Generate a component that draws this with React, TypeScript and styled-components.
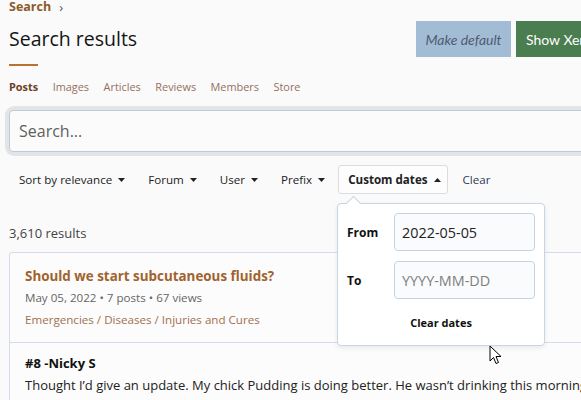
import React from "react";
import styled, { createGlobalStyle } from "styled-components";

const Global = createGlobalStyle`
  html, body { margin: 0; padding: 0; background: #fafafa; }
  body { font-family: "Open Sans", "Noto Sans", sans-serif; color: #141414; overflow: hidden; }
  #root { width: 581px; height: 400px; overflow: hidden; position: relative; }
`;

const Page = styled.div`
  width: 760px;
  padding: 0 9px;
  box-sizing: border-box;
  position: relative;
`;

const Header = styled.div`
  display: flex;
  align-items: flex-start;
`;

const LeftCol = styled.div`
  width: 407px;
`;

const Crumb = styled.div`
  font-size: 12.5px;
  font-weight: 700;
  color: #8b5a2b;
  line-height: 14px;
  display: flex;
  align-items: center;
  gap: 8px;
`;

const Chevron = styled.span`
  color: #555;
  font-weight: 400;
  font-size: 13px;
`;

const Title = styled.h1`
  margin: 11px 0 0;
  font-size: 19.5px;
  font-weight: 400;
  line-height: 28px;
  color: #141414;
`;

const Buttons = styled.div`
  display: flex;
  gap: 5px;
  margin-top: 21px;
`;

const Btn = styled.div<{ $variant: "default" | "green" }>`
  height: 36px;
  display: flex;
  align-items: center;
  padding: 0 10px;
  font-family: "Lato", sans-serif;
  font-size: 14px;
  white-space: nowrap;
  ${(p) =>
    p.$variant === "default"
      ? `background:#a3bcd6; color:#4d5d70; font-style: italic; width: 95px; box-sizing: border-box; justify-content: center;`
      : `background:#4a7d4f; color:#fff;`}
`;

const Tabs = styled.div`
  display: flex;
  gap: 14.5px;
  margin-top: 7px;
`;

const Tab = styled.div<{ $active?: boolean }>`
  border-top: 2px solid ${(p) => (p.$active ? "#b87333" : "transparent")};
  padding-top: 13px;
  font-size: 10.9px;
  line-height: 16px;
  font-weight: ${(p) => (p.$active ? 700 : 400)};
  color: ${(p) => (p.$active ? "#6b4226" : "#94705e")};
`;

const SearchWrap = styled.div`
  margin-top: 15px;
  border-radius: 5px;
  box-shadow: 0 0 0 4px #e4e4e4;
`;

const SearchInput = styled.div`
  height: 42px;
  box-sizing: border-box;
  border: 1px solid #b9cbe2;
  border-radius: 4px;
  background: #fbfbfb;
  display: flex;
  align-items: center;
  padding-left: 9px;
  font-size: 16px;
  color: #606060;
`;

const Filters = styled.div`
  display: flex;
  gap: 6px;
  margin-top: 13px;
  align-items: center;
`;

const Filter = styled.div<{ $open?: boolean }>`
  height: 29px;
  box-sizing: border-box;
  padding: 0 6px 0 9px;
  display: flex;
  align-items: center;
  gap: 6px;
  font-size: 11.6px;
  font-weight: ${(p) => (p.$open ? 700 : 400)};
  color: #222;
  border: 1px solid ${(p) => (p.$open ? "#dcdcdc" : "transparent")};
  border-radius: 3px;
  background: ${(p) => (p.$open ? "#fdfdfd" : "transparent")};
`;

const ClearLink = styled.div`
  padding: 0 9px;
  font-size: 11.6px;
  color: #2a3a55;
`;

const Caret = ({ up }: { up?: boolean }) => (
  <svg width="7" height="4" viewBox="0 0 7 4" style={{ transform: up ? "rotate(180deg)" : undefined }}>
    <path d="M0 0 L7 0 L3.5 4 Z" fill="#222" />
  </svg>
);

const Count = styled.div`
  margin-top: 30px;
  font-size: 13px;
  color: #444;
  line-height: 18px;
`;

const Card = styled.div`
  margin-top: 10px;
  border: 1px solid #d3dce8;
  border-radius: 3px;
  background: #fcfcfc;
`;

const CardHead = styled.div`
  padding: 13px 15px 12px;
  border-bottom: 1px solid #d3dce8;
`;

const ResultTitle = styled.div`
  font-size: 13.4px;
  font-weight: 700;
  color: #a0632d;
  line-height: 20px;
`;

const Meta = styled.div<{ $brown?: boolean }>`
  margin-top: 2px;
  font-size: 11.6px;
  line-height: 20px;
  color: ${(p) => (p.$brown ? "#a0704e" : "#666")};
`;

const CardBody = styled.div`
  padding: 10px 15px;
`;

const Author = styled.div`
  font-size: 13px;
  font-weight: 700;
  line-height: 20px;
  color: #111;
`;

const BodyText = styled.div`
  margin-top: 2px;
  font-size: 13px;
  line-height: 20px;
  color: #222;
  white-space: nowrap;
`;

const Popup = styled.div`
  position: absolute;
  left: 337px;
  top: 203px;
  width: 208px;
  height: 143px;
  box-sizing: border-box;
  background: #fff;
  border: 1px solid #c9d5e4;
  border-radius: 4px;
  box-shadow: 0 2px 5px rgba(0, 0, 0, 0.08);
  padding: 9px 9px 0;
  display: flex;
  flex-direction: column;
  gap: 10px;
`;

const Arrow = styled.div`
  position: absolute;
  left: 10px;
  top: -6px;
  width: 10px;
  height: 10px;
  background: #fff;
  border-left: 1px solid #c9d5e4;
  border-top: 1px solid #c9d5e4;
  transform: rotate(45deg);
`;

const Row = styled.div`
  display: flex;
  align-items: center;
`;

const Label = styled.div`
  width: 47px;
  font-size: 12px;
  font-weight: 700;
  color: #111;
`;

const DateInput = styled.div<{ $placeholder?: boolean }>`
  width: 141px;
  height: 38px;
  box-sizing: border-box;
  border: 1px solid #c5d3e6;
  border-radius: 4px;
  background: #fafbfd;
  display: flex;
  align-items: center;
  padding-left: 7px;
  font-size: 14.4px;
  color: ${(p) => (p.$placeholder ? "#7e7e7e" : "#222")};
`;

const ClearDates = styled.div`
  text-align: center;
  font-size: 11px;
  font-weight: 700;
  color: #111;
  margin-top: 6px;
`;

const Cursor = styled.svg`
  position: absolute;
  left: 489px;
  top: 345px;
`;

export default function App() {
  return (
    <>
      <Global />
      <Page>
        <Header>
          <LeftCol>
            <Crumb>
              Search <Chevron>›</Chevron>
            </Crumb>
            <Title>Search results</Title>
          </LeftCol>
          <Buttons>
            <Btn $variant="default">Make default</Btn>
            <Btn $variant="green">Show XenForo options</Btn>
          </Buttons>
        </Header>
        <Tabs>
          <Tab $active>Posts</Tab>
          <Tab>Images</Tab>
          <Tab>Articles</Tab>
          <Tab>Reviews</Tab>
          <Tab>Members</Tab>
          <Tab>Store</Tab>
        </Tabs>
        <SearchWrap>
          <SearchInput>Search...</SearchInput>
        </SearchWrap>
        <Filters>
          <Filter><span>Sort by relevance</span><Caret /></Filter>
          <Filter><span>Forum</span><Caret /></Filter>
          <Filter><span>User</span><Caret /></Filter>
          <Filter><span>Prefix</span><Caret /></Filter>
          <Filter $open><span>Custom dates</span><Caret up /></Filter>
          <ClearLink>Clear</ClearLink>
        </Filters>
        <Count>3,610 results</Count>
        <Card>
          <CardHead>
            <ResultTitle>Should we start subcutaneous fluids?</ResultTitle>
            <Meta>May 05, 2022 • 7 posts • 67 views</Meta>
            <Meta $brown>Emergencies / Diseases / Injuries and Cures</Meta>
          </CardHead>
          <CardBody>
            <Author>#8 -Nicky S</Author>
            <BodyText>Thought I’d give an update. My chick Pudding is doing better. He wasn’t drinking this morning so I</BodyText>
            <BodyText>took him to an avian specialist. Of course, as soon as I booked and...</BodyText>
          </CardBody>
        </Card>
        <Popup>
          <Arrow />
          <Row>
            <Label>From</Label>
            <DateInput>2022-05-05</DateInput>
          </Row>
          <Row>
            <Label>To</Label>
            <DateInput $placeholder>YYYY-MM-DD</DateInput>
          </Row>
          <ClearDates>Clear dates</ClearDates>
        </Popup>
      </Page>
      <Cursor width="13" height="20" viewBox="0 0 13 20">
        <path d="M1 1 L1 16 L4.5 12.5 L7 18.5 L9.5 17.5 L7 11.5 L12 11.5 Z" fill="#fff" stroke="#000" strokeWidth="1" strokeLinejoin="round" />
      </Cursor>
    </>
  );
}
